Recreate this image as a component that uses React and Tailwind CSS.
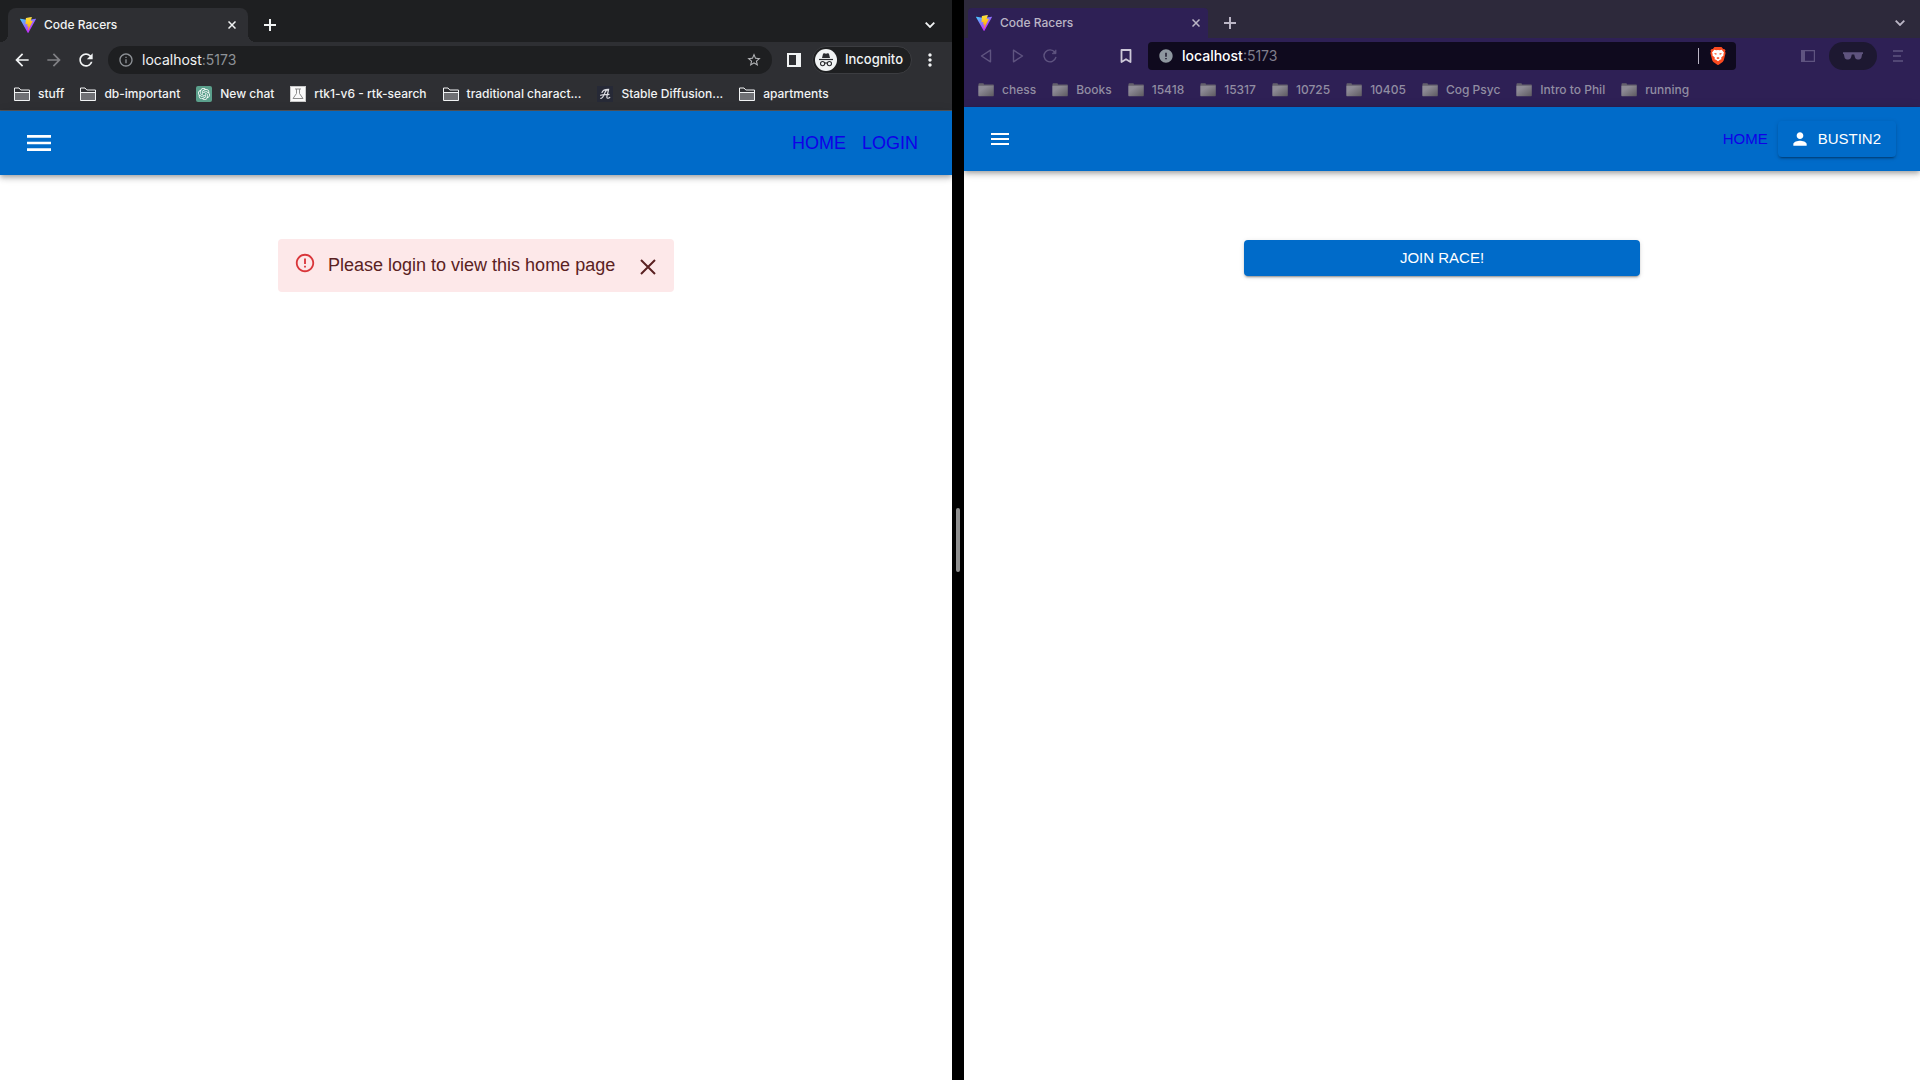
import React, { useId } from "react";
import {
  MdArrowBack,
  MdArrowForward,
  MdRefresh,
  MdInfoOutline,
  MdStarBorder,
  MdMenu,
  MdPerson,
  MdErrorOutline,
  MdMoreVert,
  MdError,
} from "react-icons/md";
import { SiOpenai } from "react-icons/si";

function ViteLogo() {
  const id = useId();
  return (
    <svg viewBox="0 0 256 257" className="size-4 shrink-0" aria-hidden="true">
      <defs>
        <linearGradient id={id + "a"} x1="0" y1="0" x2="0.58" y2="0.78">
          <stop offset="0" stopColor="#41D1FF" />
          <stop offset="1" stopColor="#BD34FE" />
        </linearGradient>
        <linearGradient id={id + "b"} x1="0.43" y1="0.02" x2="0.5" y2="0.89">
          <stop offset="0" stopColor="#FFEA83" />
          <stop offset="0.083" stopColor="#FFDD35" />
          <stop offset="1" stopColor="#FFA800" />
        </linearGradient>
      </defs>
      <path
        fill={`url(#${id}a)`}
        d="M255.153 37.938L134.897 252.976c-2.483 4.44-8.862 4.466-11.382.048L.875 37.958c-2.746-4.814 1.371-10.646 6.827-9.67l120.385 21.517a6.537 6.537 0 0 0 2.322-.004l117.867-21.483c5.438-.991 9.574 4.796 6.877 9.62Z"
      />
      <path
        fill={`url(#${id}b)`}
        d="M185.432.063L96.44 17.501a3.268 3.268 0 0 0-2.634 3.014l-5.474 92.456a3.268 3.268 0 0 0 3.997 3.378l24.777-5.718c2.318-.535 4.413 1.507 3.936 3.838l-7.361 36.047c-.495 2.426 1.782 4.5 4.151 3.78l15.304-4.649c2.372-.72 4.652 1.36 4.15 3.788l-11.698 56.621c-.732 3.542 3.979 5.473 5.943 2.437l1.313-2.028l72.516-144.72c1.215-2.423-.88-5.186-3.54-4.672l-25.505 4.922c-2.396.462-4.435-1.77-3.759-4.114l16.646-57.705c.677-2.35-1.37-4.583-3.769-4.113Z"
      />
    </svg>
  );
}

function Cross({ className, strokeWidth = 1.5 }) {
  return (
    <svg viewBox="0 0 8 8" className={className} fill="none" stroke="currentColor" strokeWidth={strokeWidth} aria-hidden="true">
      <path d="M0.5 0.5l7 7M7.5 0.5l-7 7" />
    </svg>
  );
}

function Plus() {
  return (
    <svg viewBox="0 0 12 12" className="size-3" fill="none" stroke="currentColor" strokeWidth="2" aria-hidden="true">
      <path d="M6 0v12M0 6h12" />
    </svg>
  );
}

function Chevron() {
  return (
    <svg viewBox="0 0 10 6" className="h-1.5 w-2.5" fill="none" stroke="currentColor" strokeWidth="1.8" aria-hidden="true">
      <path d="M0.7 0.7L5 5l4.3-4.3" />
    </svg>
  );
}

function OutlineFolder() {
  return (
    <svg viewBox="0 0 16 14" className="h-3.5 w-4" aria-hidden="true">
      <path d="M0.5 13.5v-12.500h4.500l1.800 2h8.700v10.500z" fill="#2e2f33" stroke="#f1f3f4" />
      <path d="M1 5.5h14v7.500H1z" fill="#6f7074" />
      <path d="M1 5.500h14" stroke="#f1f3f4" />
    </svg>
  );
}

function SolidFolder() {
  const id = useId();
  return (
    <svg viewBox="0 0 16 14" className="h-3.5 w-4" aria-hidden="true">
      <defs>
        <linearGradient id={id} x1="0" y1="0" x2="1" y2="1">
          <stop offset="0.3" stopColor="#8d8a95" />
          <stop offset="1" stopColor="#5d5a60" />
        </linearGradient>
      </defs>
      <path d="M0.5 2V1.2C0.5 0.5 1 0.3 1.5 0.3H5c0.6 0 0.8 0.5 1 1.2H15c0.6 0 0.8 0.3 0.8 1V3H0.5z" fill="#64606c" />
      <path d="M0.3 2.7h15.5v9.5c0 0.7-0.3 1-1 1H1.3c-0.7 0-1-0.3-1-1z" fill={`url(#${id})`} />
    </svg>
  );
}

function ChatIcon() {
  return (
    <span className="flex size-4 items-center justify-center rounded-xs bg-[#5ba08c]">
      <SiOpenai className="size-3 text-white" />
    </span>
  );
}

function FlaskIcon() {
  return (
    <svg viewBox="0 0 16 16" className="size-4" aria-hidden="true">
      <path d="M0 0h16v16H0z" fill="#c9c9c9" />
      <path d="M1 1h14v14H1z" fill="#fafafa" />
      <path d="M5 3h6M6.500 3v4.500L3 12.500h10L9.500 7.500V3" fill="none" stroke="#8d8d8d" />
    </svg>
  );
}

function ScriptAIcon() {
  return (
    <svg viewBox="0 0 16 16" className="size-4" aria-hidden="true">
      <path d="M0 0h16v16H0z" fill="#262936" />
      <path
        d="M3.800 12.300C5.800 12.500 7 9 8 6.500 9 4.300 10.500 3.300 11.600 3.400 11.300 6 9.600 9.500 9.900 11.500 10.100 12.700 11.800 12.300 12.800 11.300M5 6.500C5.800 4.500 8.500 3.300 11.600 3.400M3.600 9.300C6 8.300 9.500 8.700 12 8.300"
        fill="none"
        stroke="#dcdce2"
        strokeWidth="1.200"
        strokeLinecap="round"
      />
    </svg>
  );
}

function IncognitoIcon() {
  return (
    <svg viewBox="0 0 22 22" className="size-[22px]" aria-hidden="true">
      <circle cx="11" cy="11" r="11" fill="#f1f3f4" />
      <g fill="#2a2b2f">
        <path d="M7 9l1-4c0.200-0.600 0.700-0.900 1.300-0.700L11 4.800l1.700-0.500c0.600-0.200 1.100 0.100 1.300 0.700L15 9z" />
        <path d="M4 9.900h14v1.200H4z" />
      </g>
      <g fill="none" stroke="#2a2b2f" strokeWidth="1.100">
        <circle cx="7.600" cy="14.600" r="2.100" />
        <circle cx="14.400" cy="14.600" r="2.100" />
        <path d="M9.700 14.200q1.300-0.700 2.600 0" />
      </g>
    </svg>
  );
}

function BraveLion() {
  return (
    <svg viewBox="0 0 16 18" className="h-[18px] w-4" aria-hidden="true">
      <path
        d="M4.500 0h7l1.700 1.900c1-0.100 1.600 0.300 2.300 1.300l-0.500 1.300 0.600 1.600-1.700 6.700c-0.300 1.100-0.700 1.700-1.600 2.400L8.700 17.700c-0.500 0.300-0.900 0.300-1.400 0L3.700 15.200c-0.900-0.700-1.300-1.300-1.600-2.400L0.400 6.100 1 4.500 0.500 3.200c0.700-1 1.300-1.400 2.300-1.300z"
        fill="#fb4a20"
      />
      <path
        d="M4.300 2.800l1.900 0.500L8 3l1.800 0.300 1.900-0.500 2.300 2.700-0.600 1.400 0.100 1.500-2.300 2.200 0.200 1.700-1.400 0.500L8 14.200 6 12.800l-1.400-0.500 0.200-1.700L2.500 8.400l0.100-1.500L2 5.500z"
        fill="#fff"
      />
      <path d="M4.300 6l2.400 0.600L6.500 7.600 5 7.500zM11.700 6L9.300 6.600l0.200 1 1.500-0.100zM6.300 11L8 10l1.700 1L8 12.200z" fill="#fb4a20" />
    </svg>
  );
}

function Glasses() {
  return (
    <svg viewBox="0 0 20 8" className="h-2 w-5" fill="#5f547e" aria-hidden="true">
      <path d="M0 0.300h20v1.500l-0.900 0.500-0.600 3C18.200 6.700 17.300 7.400 16 7.400h-1.300c-1.400 0-2.300-0.700-2.700-2L11.200 2.600H8.800L8 5.400c-0.400 1.300-1.300 2-2.700 2H4C2.700 7.400 1.800 6.700 1.500 5.300l-0.600-3L0 1.800z" />
    </svg>
  );
}

const iconButton = "flex h-7 w-8 shrink-0 items-center justify-center";

function Bookmarks({ items, className }) {
  return (
    <nav aria-label="Bookmarks" className={className}>
      {items.map(([label, Icon]) => (
        <a key={label} href="#" className="flex items-center gap-2 whitespace-nowrap">
          <Icon />
          {label}
        </a>
      ))}
    </nav>
  );
}

const leftBookmarks = [
  ["stuff", OutlineFolder],
  ["db-important", OutlineFolder],
  ["New chat", ChatIcon],
  ["rtk1-v6 - rtk-search", FlaskIcon],
  ["traditional charact...", OutlineFolder],
  ["Stable Diffusion...", ScriptAIcon],
  ["apartments", OutlineFolder],
];

const rightBookmarks = ["chess", "Books", "15418", "15317", "10725", "10405", "Cog Psyc", "Intro to Phil", "running"].map(
  (label) => [label, SolidFolder]
);

const barShadow =
  "shadow-[0_2px_4px_-1px_rgba(0,0,0,0.2),0_4px_5px_0_rgba(0,0,0,0.14),0_1px_10px_0_rgba(0,0,0,0.12)]";
const buttonShadow =
  "shadow-[0_3px_1px_-2px_rgba(0,0,0,0.2),0_2px_2px_0_rgba(0,0,0,0.14),0_1px_5px_0_rgba(0,0,0,0.12)]";

function ChromeWindow() {
  return (
    <section className="flex min-w-0 flex-col overflow-hidden bg-white">
      <header className="bg-[#2e2f33] font-['Inter',sans-serif] text-xs font-medium text-[#f1f3f4]">
        <div className="flex h-[42px] items-center bg-[#1e1f21] pr-1.5 pt-2">
          <div className="size-2 self-end bg-[radial-gradient(circle_at_top_left,#1e1f21_8px,#2e2f33_8px)]" />
          <div className="flex h-full w-60 items-center gap-2 rounded-t-lg bg-[#2e2f33] px-3">
            <ViteLogo />
            <span className="grow">Code Racers</span>
            <button type="button" aria-label="Close tab">
              <Cross className="size-2" />
            </button>
          </div>
          <div className="size-2 self-end bg-[radial-gradient(circle_at_top_right,#1e1f21_8px,#2e2f33_8px)]" />
          <button type="button" aria-label="New tab" className="flex size-7 items-center justify-center">
            <Plus />
          </button>
          <button type="button" aria-label="Search tabs" className={"ml-auto " + iconButton}>
            <Chevron />
          </button>
        </div>
        <div className="flex items-center px-1.5 py-1">
          <button type="button" aria-label="Back" className={iconButton}>
            <MdArrowBack className="size-5" />
          </button>
          <button type="button" aria-label="Forward" className={iconButton + " text-[#808185]"}>
            <MdArrowForward className="size-5" />
          </button>
          <button type="button" aria-label="Reload" className={iconButton}>
            <MdRefresh className="size-5" />
          </button>
          <div className="ml-1.5 flex h-7 grow items-center gap-2 rounded-full bg-[#1e1f21] px-2.5">
            <MdInfoOutline className="size-4 text-[#8e9297]" />
            <a href="#" className="grow text-sm leading-5 font-normal">
              localhost<span className="text-[#8e9297]">:5173</span>
            </a>
            <button type="button" aria-label="Bookmark this tab" className="text-[#b4b5b8]">
              <MdStarBorder className="size-4" />
            </button>
          </div>
          <button type="button" aria-label="Side panel" className={"ml-1.5 " + iconButton}>
            <svg viewBox="0 0 14 14" className="size-3.5" aria-hidden="true">
              <path d="M0 0h14v14H0zM2 2v10h7V2z" fill="currentColor" fillRule="evenodd" />
            </svg>
          </button>
          <button
            type="button"
            className="ml-0.5 flex h-7 items-center gap-2 rounded-full border border-[#3c3d41] bg-[#1e1f21] pr-2 pl-0.5 text-[13px]"
          >
            <IncognitoIcon />
            Incognito
          </button>
          <button type="button" aria-label="Menu" className={"ml-0.5 " + iconButton}>
            <MdMoreVert className="size-5" />
          </button>
        </div>
        <Bookmarks items={leftBookmarks} className="flex h-8 items-center gap-4 px-3.5" />
        <div className="h-px bg-[#54565a]" />
      </header>
      <div className={"flex h-16 items-center gap-4 bg-[#006bc9] pr-[34px] pl-[23px] text-lg " + barShadow}>
        <button type="button" aria-label="Open navigation" className="text-white">
          <MdMenu className="size-8" />
        </button>
        <a href="#" className="ml-auto text-[#0f00e8]">HOME</a>
        <a href="#" className="text-[#0f00e8]">LOGIN</a>
      </div>
      <main className="flex justify-center pt-16">
        <div role="alert" className="flex w-full max-w-[396px] items-start rounded bg-[#fde8e9] px-4 py-3 text-[#5a2122]">
          <MdErrorOutline className="mt-px mr-3 size-[22px] text-[#d9363a]" />
          <p className="grow text-lg leading-[29px]">Please login to view this home page</p>
          <button type="button" aria-label="Close" className="mt-1 -mr-0.5 flex size-6 items-center justify-center">
            <Cross className="size-4" strokeWidth={1} />
          </button>
        </div>
      </main>
    </section>
  );
}

function BraveWindow() {
  return (
    <section className="flex min-w-0 flex-col overflow-hidden bg-white">
      <header className="bg-[#2e2055] font-['Inter',sans-serif] text-xs font-medium text-[#bbb6c6]">
        <div className="flex h-[38px] items-center bg-[#2d293b] pt-2 pr-1 pl-1">
          <div className="flex h-full w-60 items-center gap-2 rounded-t bg-[#2e2055] px-2">
            <ViteLogo />
            <span className="grow">Code Racers</span>
            <button type="button" aria-label="Close tab">
              <Cross className="size-2" />
            </button>
          </div>
          <button type="button" aria-label="New tab" className="ml-2 flex size-7 items-center justify-center">
            <Plus />
          </button>
          <button type="button" aria-label="Search tabs" className={"ml-auto " + iconButton}>
            <Chevron />
          </button>
        </div>
        <div className="flex items-center px-1.5 py-1 text-[#5f5480]">
          <button type="button" aria-label="Back" className={iconButton}>
            <svg viewBox="0 0 12 14" className="h-3.5 w-3" fill="none" stroke="currentColor" strokeWidth="1.400" strokeLinejoin="round" aria-hidden="true">
              <path d="M10.500 1.200v11.600L1.500 7z" />
            </svg>
          </button>
          <button type="button" aria-label="Forward" className={iconButton}>
            <svg viewBox="0 0 12 14" className="h-3.5 w-3" fill="none" stroke="currentColor" strokeWidth="1.400" strokeLinejoin="round" aria-hidden="true">
              <path d="M1.500 1.200v11.600L10.500 7z" />
            </svg>
          </button>
          <button type="button" aria-label="Reload" className={iconButton}>
            <svg viewBox="0 0 14 14" className="size-3.5" fill="none" stroke="currentColor" strokeWidth="1.400" strokeLinecap="round" aria-hidden="true">
              <path d="M12.800 8.500A6 6 0 1 1 11.800 3.200" />
              <path d="M13 1.200v3.500H9.500z" fill="currentColor" strokeWidth="0.800" />
            </svg>
          </button>
          <button type="button" aria-label="Bookmark this page" className={"ml-11 text-[#cdc8d8] " + iconButton}>
            <svg viewBox="0 0 12 14" className="h-3.5 w-3" fill="none" stroke="currentColor" strokeWidth="1.800" strokeLinejoin="round" aria-hidden="true">
              <path d="M1.500 1h9v12L6 10.200 1.500 13z" />
            </svg>
          </button>
          <div className="mr-14 ml-1.5 flex h-7 grow items-center gap-2 rounded bg-[#0f0a1e] px-2.5">
            <MdError className="size-4 text-[#8e979f]" />
            <a href="#" className="grow text-sm leading-5 text-white">
              localhost<span className="font-normal text-[#807e8c]">:5173</span>
            </a>
            <div className="h-4 w-px bg-[#bbb6c6]" />
            <button type="button" aria-label="Brave Shields" className="ml-[3px]">
              <BraveLion />
            </button>
          </div>
          <button type="button" aria-label="Sidebar" className={iconButton}>
            <svg viewBox="0 0 14 12" className="h-3 w-3.5" aria-hidden="true">
              <path d="M0.600 0.600h12.800v10.800H0.600z" fill="none" stroke="currentColor" strokeWidth="1.200" />
              <path d="M1 1h3v10H1z" fill="currentColor" />
            </svg>
          </button>
          <button type="button" aria-label="Private window" className="mx-[5px] flex h-7 w-12 items-center justify-center rounded-full bg-[#1d1831]">
            <Glasses />
          </button>
          <button type="button" aria-label="Menu" className={iconButton}>
            <svg viewBox="0 0 10 12" className="h-3 w-2.5" fill="none" stroke="currentColor" strokeWidth="1.500" aria-hidden="true">
              <path d="M0 1h10M0 6h8M0 11h10" />
            </svg>
          </button>
        </div>
        <Bookmarks items={rightBookmarks} className="flex h-[33px] items-center gap-4 px-3.5 pb-0.5 text-[#918da2]" />
      </header>
      <div className={"flex h-16 items-center bg-[#006bc9] px-6 text-[15px] " + barShadow}>
        <button type="button" aria-label="Open navigation" className="text-white">
          <MdMenu className="size-6" />
        </button>
        <a href="#" className="ml-auto text-[#0f00e8]">HOME</a>
        <button type="button" className={"ml-2.5 flex h-9 items-center gap-2 rounded pr-[15px] pl-3 text-white " + buttonShadow}>
          <MdPerson className="size-5" />
          BUSTIN2
        </button>
      </div>
      <main className="flex justify-center pt-[69px]">
        <button type="button" className={"h-9 w-full max-w-[396px] rounded bg-[#006bc9] text-[15px] text-white " + buttonShadow}>
          JOIN RACE!
        </button>
      </main>
    </section>
  );
}

export default function App() {
  return (
    <div className="grid min-h-screen grid-cols-[238fr_12px_239fr] bg-black font-['Liberation_Sans',Arial,sans-serif]">
      <ChromeWindow />
      <div role="separator" aria-orientation="vertical" className="flex items-center justify-center">
        <div className="h-16 w-1 rounded-full bg-[#8e8e8e]" />
      </div>
      <BraveWindow />
    </div>
  );
}
